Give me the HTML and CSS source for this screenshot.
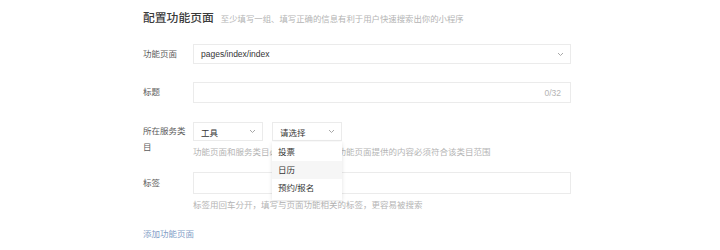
FILE: index.html
```html
<!DOCTYPE html>
<html>
<head>
<meta charset="utf-8">
<link rel="stylesheet" href="styles.css">
</head>
<body>
<div class="page">
  <div class="head">
    <span class="title">配置功能页面</span>
    <span class="subtitle">至少填写一组、填写正确的信息有利于用户快速搜索出你的小程序</span>
  </div>
  <div class="form">
    <div class="row r1">
      <div class="label">功能页面</div>
      <div class="control">
        <div class="box select wide h20">
          <span class="val">pages/index/index</span>
          <svg class="chev" width="7" height="5" viewBox="0 0 7 5"><path d="M1 1l2.5 2.5L6 1" fill="none" stroke="#a8a8a8" stroke-width="1"/></svg>
        </div>
      </div>
    </div>
    <div class="row r2">
      <div class="label">标题</div>
      <div class="control">
        <div class="box wide h21 counter-box"><span class="counter">0/32</span></div>
      </div>
    </div>
    <div class="row r3">
      <div class="label">所在服务类目</div>
      <div class="control">
        <div class="selects">
          <div class="box select small h19">
            <span class="val">工具</span>
            <svg class="chev" width="7" height="5" viewBox="0 0 7 5"><path d="M1 1l2.5 2.5L6 1" fill="none" stroke="#a8a8a8" stroke-width="1"/></svg>
          </div>
          <div class="drop-wrap">
            <div class="box select small h19">
              <span class="val">请选择</span>
              <svg class="chev" width="7" height="5" viewBox="0 0 7 5"><path d="M1 1l2.5 2.5L6 1" fill="none" stroke="#a8a8a8" stroke-width="1"/></svg>
            </div>
            <ul class="menu">
              <li>投票</li>
              <li class="hover">日历</li>
              <li>预约/报名</li>
            </ul>
          </div>
        </div>
        <div class="hint">功能页面和服务类目必须一一对应，且功能页面提供的内容必须符合该类目范围</div>
      </div>
    </div>
    <div class="row r4">
      <div class="label">标签</div>
      <div class="control">
        <div class="box wide h22"></div>
        <div class="hint">标签用回车分开，填写与页面功能相关的标签，更容易被搜索</div>
      </div>
    </div>
    <a class="add">添加功能页面</a>
  </div>
</div>
</body>
</html>
```
FILE: styles.css
```css
* { box-sizing: border-box; }
html, body { margin: 0; padding: 0; background: #fff; }
body {
  font-family: "Liberation Sans", "Noto Sans CJK SC", sans-serif;
  font-size: 8.5px;
  color: #353535;
}
.page { padding: 10px 0 0 143px; width: 720px; height: 250px; }
.head { height: 16px; line-height: 16px; display: flex; align-items: baseline; }
.title { font-size: 11.8px; color: #3a3a3a; font-weight: 500; }
.subtitle { margin-left: 7px; font-size: 8.4px; color: #b4b4b4; }

.form { margin-top: 18px; }
.row { display: flex; }
.label { width: 50px; flex: none; color: #5c5c5c; line-height: 16px; padding-right: 6px; }
.control { flex: none; width: 378px; }
.r1 .label { padding-top: 2px; }
.r2 { margin-top: 18px; }
.r2 .label { padding-top: 2px; }
.r3 { margin-top: 19px; }
.r3 .label { padding-top: 1px; }
.r4 { margin-top: 14px; }
.r4 .label { padding-top: 3px; }

.box { border: 1px solid #ebebeb; background: #fff; display: flex; align-items: center; }
.wide { width: 378px; }
.h20 { height: 20px; }
.h21 { height: 21px; }
.h22 { height: 22px; }
.h19 { height: 19px; }
.select { padding: 0 6px 0 7px; justify-content: space-between; }
.val { color: #353535; }
.chev { flex: none; }
.counter-box { justify-content: flex-end; padding-right: 9px; }
.counter { color: #b4b4b4; }

.selects { display: flex; gap: 9px; }
.small { width: 70px; }
.drop-wrap { position: relative; }
.menu {
  position: absolute; left: 0; top: 20px; width: 70px;
  margin: 0; padding: 1px 0 3px; list-style: none;
  background: #fff; z-index: 2;
  box-shadow: 0 1px 4px rgba(0,0,0,0.12);
}
.menu li { height: 18px; line-height: 18px; padding-left: 6px; color: #353535; }
.menu li.hover { background: #f6f6f6; }

.hint { margin-top: 5px; line-height: 12px; color: #b4b4b4; }
.add { display: block; margin-top: 17px; line-height: 12px; color: #7f9dc6; }
```
